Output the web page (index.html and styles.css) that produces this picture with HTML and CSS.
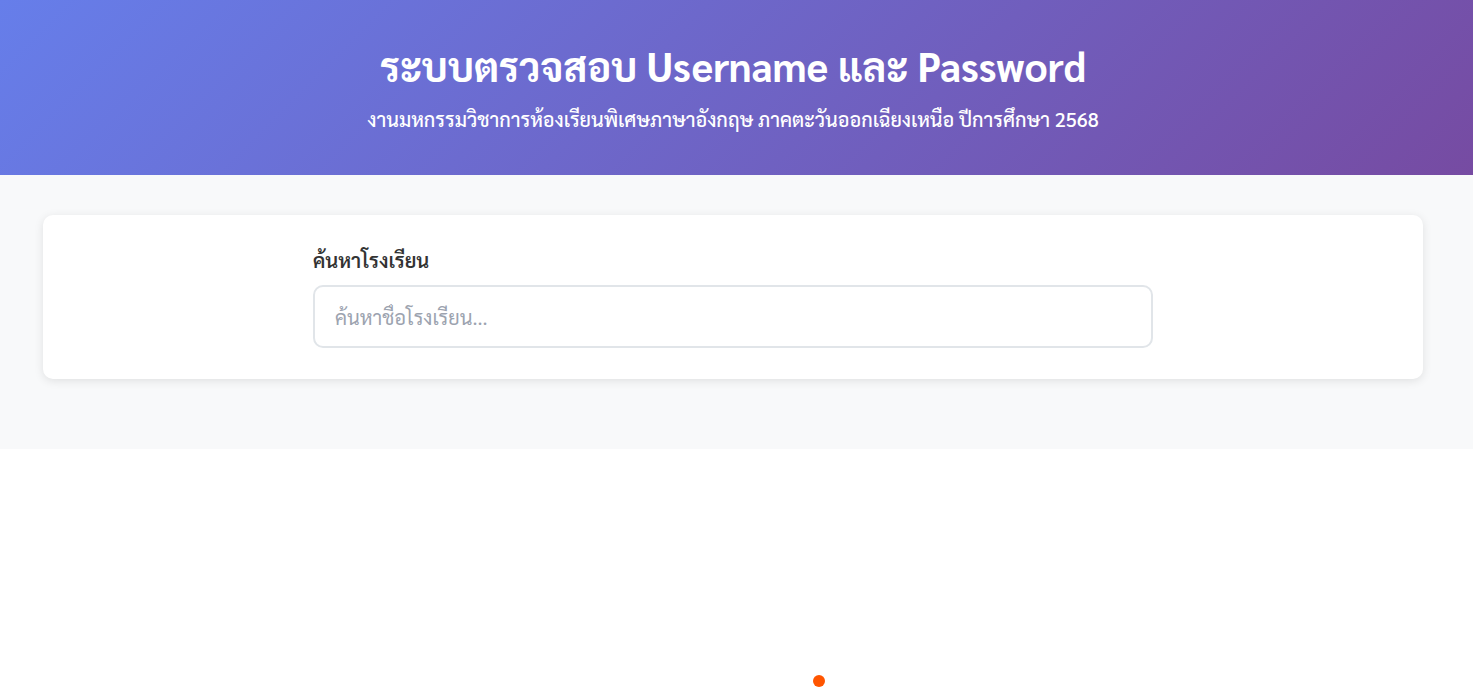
FILE: index.html
```html
<!DOCTYPE html>
<html lang="th">
<head>
<meta charset="utf-8">
<title>ระบบตรวจสอบ Username และ Password</title>
<link rel="stylesheet" href="styles.css">
</head>
<body>
<header class="hero">
  <h1 class="hero-title">ระบบตรวจสอบ Username และ Password</h1>
  <p class="hero-sub">งานมหกรรมวิชาการห้องเรียนพิเศษภาษาอังกฤษ ภาคตะวันออกเฉียงเหนือ ปีการศึกษา 2568</p>
</header>
<main class="content">
  <section class="card">
    <div class="search">
      <label class="search-label" for="q">ค้นหาโรงเรียน</label>
      <input id="q" class="search-input" type="text" placeholder="ค้นหาชื่อโรงเรียน...">
    </div>
  </section>
</main>
<div class="loader-dot"></div>
</body>
</html>
```
FILE: styles.css
```css
* { box-sizing: border-box; }
html, body { margin: 0; padding: 0; }
body {
  font-family: "Sarabun", "Noto Sans Thai Looped", "Noto Sans", sans-serif;
  background: #ffffff;
  color: #333333;
}
.hero {
  height: 175px;
  background: linear-gradient(135deg, #667eea 0%, #764ba2 100%);
  color: #ffffff;
  text-align: center;
  padding: 37px 7px 0 0;
}
.hero-title {
  margin: 0;
  font-size: 40px;
  font-weight: 700;
  line-height: 56px;
}
.hero-sub {
  margin: 12px 0 0;
  font-size: 19.8px;
  line-height: 28px;
  font-weight: 500;
}
.content {
  background: #f8f9fa;
  padding: 40px 50px 70px 43px;
}
.card {
  background: #ffffff;
  border-radius: 10px;
  box-shadow: 0 2px 10px rgba(0, 0, 0, 0.1);
  padding: 30px 20px 30px;
  height: 164px;
}
.search {
  max-width: 840px;
  margin: 0 auto;
  display: flex;
  flex-direction: column;
}
.search-label {
  font-size: 20px;
  font-weight: 600;
  color: #333333;
  line-height: 30px;
  margin-bottom: 10px;
}
.search-input {
  height: 63px;
  border: 2px solid #e1e5e9;
  border-radius: 10px;
  padding: 0 20px;
  font-family: inherit;
  font-size: 20px;
  color: #333333;
  outline: none;
}
.search-input::placeholder { color: #9ca3af; }
.loader-dot {
  position: absolute;
  left: 813px;
  top: 675px;
  width: 12px;
  height: 12px;
  border-radius: 50%;
  background: #ff5500;
}
```
